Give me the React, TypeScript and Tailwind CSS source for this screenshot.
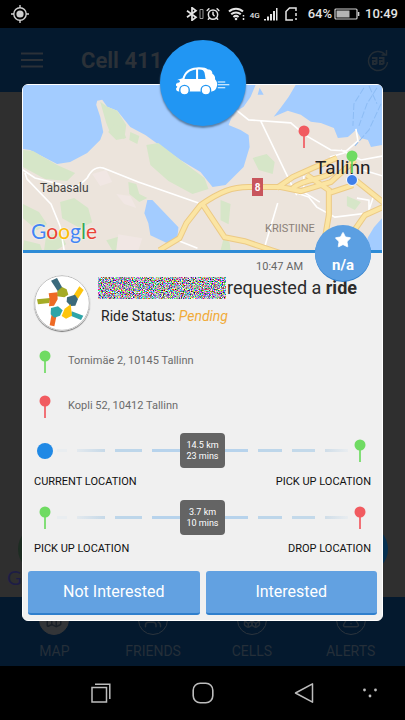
import React from "react";
import { AlarmClock, Star, Map as MapIcon, Users, Boxes, TriangleAlert } from "lucide-react";

const tabs = [
  { label: "MAP", Icon: MapIcon, active: true },
  { label: "FRIENDS", Icon: Users, active: false },
  { label: "CELLS", Icon: Boxes, active: false },
  { label: "ALERTS", Icon: TriangleAlert, active: false }
];

const addresses = [
  { text: "Tornimäe 2, 10145 Tallinn", color: "text-[#6fdb62]" },
  { text: "Kopli 52, 10412 Tallinn", color: "text-[#f15b60]" }
];

function Pin({ color }: { color: string }) {
  return (
    <svg viewBox="0 0 12 24" className={`h-6 w-3 shrink-0 ${color}`} aria-hidden="true">
      <rect x="5" y="8" width="2" height="15" fill="currentColor" opacity="0.85" />
      <circle cx="6" cy="6" r="5.5" fill="currentColor" />
    </svg>
  );
}

function StatusBar() {
  return (
    <div className="flex h-7 items-center bg-black pl-[11px] pr-[7px] text-[13px] font-medium text-[#e4e4e4]">
      <svg viewBox="0 0 18 18" className="h-[18px] w-[18px]" fill="none" stroke="#cfcfcf" strokeWidth="1.4">
        <circle cx="9" cy="9" r="6.2" />
        <path d="M9 0v3M9 15v3M0 9h3M15 9h3" />
        <circle cx="9" cy="9" r="3.6" fill="#cfcfcf" stroke="none" />
      </svg>
      <div className="ml-auto flex items-center">
        <svg viewBox="0 0 12 14" className="h-3.5 w-3" fill="none" stroke="#e4e4e4" strokeWidth="1.7">
          <path d="M1 3.800l9 6.400L6 13.300V.7l4 3.100L1 10.200" />
        </svg>
        <svg viewBox="0 0 5 10" className="ml-px h-2.5 w-[5px]" fill="none" stroke="#9a9a9a">
          <path d="M1 .5h3v9H1z" />
        </svg>
        <AlarmClock className="ml-0.5 h-3.5 w-3.5" strokeWidth={2.6} />
        <svg viewBox="0 0 18 14" className="ml-2 h-3.5 w-[18px]" fill="none" stroke="#e4e4e4" strokeWidth="2">
          <path d="M1 4.500a10 10 0 0 1 14 0M3.200 7.300a7 7 0 0 1 9.600 0M5.400 10a4 4 0 0 1 5.200 0" />
          <circle cx="8" cy="12" r="1.300" fill="#e4e4e4" stroke="none" />
          <path d="M15.500 8v1.500M15.500 11v2" strokeWidth="1.500" />
        </svg>
        <span className="ml-1 mt-1 text-[8px] leading-none">4G</span>
        <svg viewBox="0 0 14 14" className="ml-1 h-3.5 w-3.5" fill="#e4e4e4">
          <path d="M0 12h2v1.500H0zM3 9.500h2v4H3zM6 7h2v6.500H6zM9 4h2v9.500H9zM12 1h1.500v12.500H12z" />
        </svg>
        <svg viewBox="0 0 12 14" className="ml-[7px] h-3.5 w-3" fill="none" stroke="#e4e4e4" strokeWidth="1.500">
          <path d="M8 13H1V4.500L4.500 1H11v3M11 6v3M11 11v2" />
        </svg>
        <span className="ml-[11px]">64%</span>
        <svg viewBox="0 0 26 12" className="ml-0.5 h-3 w-[26px]" fill="none" stroke="#d0d0d0" strokeWidth="1.200">
          <rect x="1" y="1" width="22" height="10" rx="1" />
          <rect x="2.500" y="2.500" width="13" height="7" fill="#b5b5b5" stroke="none" />
          <path d="M24.600 4v4" strokeWidth="1.500" />
        </svg>
        <span className="ml-[5px]">10:49</span>
      </div>
    </div>
  );
}

function AppHeader() {
  return (
    <header className="flex h-16 items-center bg-[#04192e] px-[21px] text-[#2b3138]">
      <button aria-label="Menu">
        <svg viewBox="0 0 22 16" className="h-4 w-[22px]" stroke="currentColor" strokeWidth="2">
          <path d="M0 1.500h22M0 8h22M0 14.500h22" />
        </svg>
      </button>
      <h1 className="ml-[38px] text-[22px] font-bold">Cell 411</h1>
      <button aria-label="Refresh" className="-mr-1.5 ml-auto text-[#222c35]">
        <svg viewBox="0 0 24 24" className="h-6 w-6" fill="none" stroke="currentColor" strokeWidth="1.500">
          <path d="M19 6.500A9.500 9.500 0 1 0 21.500 14M20.500 2v5h-5" />
          <path d="M6 10h4.500v6M10.500 13H7v3h3.500M13 10h4.500v6M17.500 13H14v3h3.500" strokeWidth="2" />
        </svg>
      </button>
    </header>
  );
}

function CarIcon() {
  return (
    <svg viewBox="76 106 162 88" className="h-[30px] w-[55px]" aria-hidden="true">
      <path
        d="M84 146l14-4c5-18 18-31 42-32 18-1 27 1 33 6 9 0 14 6 13 13 6 4 9 9 8 16 6 6 8 14 5 22-2 8-6 13-16 14H88c-6 0-9-3-9-9l4-5-4-3v-6l5-2z"
        fill="#fff"
      />
      <path d="M104 144c3-15 14-25 34-28v28zM144 116c12-1 17 2 19 10l3 18h-22z" fill="#2196f3" />
      <circle cx="86" cy="151" r="4" fill="#2196f3" />
      <circle cx="104" cy="177" r="14" fill="#fff" stroke="#2196f3" strokeWidth="4" />
      <circle cx="167" cy="177" r="14" fill="#fff" stroke="#2196f3" strokeWidth="4" />
      <path d="M202 153h22M202 161h34M202 170h22" stroke="#fff" strokeWidth="3" />
    </svg>
  );
}

function RideMap() {
  return (
    <div className="relative h-[168px] overflow-hidden rounded-t border-b-3 border-[#2d8bd6] bg-[#a3ccff]">
      <svg viewBox="23 85 358 165" preserveAspectRatio="xMidYMid slice" className="h-full w-full" fill="none">
        <path
          d="M22 149l8 1 27 14 13-2 17-9 13-13 3-8-3-15-4-12 1-4 5-1 5 7 10 4 13 16 15 8 18 13 17 12 20 12 12 15 13-2 8-8 10-10 6-20-1-12-8-5-12-5 5-12 10-6 7-10 5-12h40l-7 12-8 11-7 9 14-6 13 4 10 7 10 1 13 5 4 10 10-1 8-7 5 8 7 2 3 7 12-2v72l-9 10-6 10-4 13H22z"
          fill="#ece4dc"
        />
        <g fill="#d6e6c8">
          <path d="M100 102l7 5 10 4 9 14-2 14-14-6-4-10z" />
          <path d="M146 145l12-2 22 17 24 18 4 11-16 5-24-13-18-16z" />
          <path d="M23 150l10 1 24 14 18 8-8 8-22-2-22-12zM60 202l14-4 14 10 4 14-12 6-18-10z" />
          <path d="M23 204l16 8 8 12-10 6-14-12zM46 236l14-4 6 12-10 6H44zM128 182l8 2 3 10 8 4-8 4-10-8zM114 124l8 4 4 10-10 2-8-8zM130 132l9 4-2 8-8-4z" />
          <path d="M252 158l14-4 8 8-2 12-14-4zM220 200l10 4-2 20-8-4zM24 240l16 4 2 6H23zM223 238l6 4 1 8h-10zM346 196l14 6-6 8-8-4zM106 240l14-4 8 8-4 6h-12z" />
        </g>
        <path d="M92 174l14-4 6 12-12 4zM116 194l14 2 6 12-12-4zM118 234l24 4-4 12h-22z" fill="#f1e7e4" />
        <path d="M147 200l5 0 26 27-1 10-10 6-17-8-2-12-4-10zM259 88l4 7h-6z" fill="#a3ccff" />
        <g stroke="#fff" strokeWidth="1.600">
          <path d="M23 170l12 8 24 6c16 6 20 2 28-6 4-8 10-12 16-10l35 14 60 21M25 173l2 6 24 25 9 22 4 24" />
          <path d="M233 108l15 12 42 3 14 12 26 15 16 1M260 121l30 62 6 12M277 203l-14 47M296 193l12 4 8 10 18 10 33-4 6-18M303 176v16l16 10M355 129l2 12-14 12-14 4M340 150l20 10 22-4M177 240l20 8M362 170l20 6M356 198l12 2v10" />
        </g>
        <g stroke="#8dbcf4" strokeWidth="1" strokeDasharray="7 2">
          <path d="M363 88l-10 16-1 22M376 88l-10 16-8 22M380 104l-12 26-14 16M368 86l8 18" />
        </g>
        <g stroke="#ecca85" strokeWidth="6">
          <path d="M159 250l20-12 7-15 14-18c20-14 32-18 48-18h32l20 4 30-9 24-22M202 204l22 33 20 4 36 12M276 188l16-11 20-9 24-10M292 188c12-10 30-8 40-16M306 175l22 15 0 25-6 35M328 193l24-8M352 178l30 24M350 235l14-20 18-8" />
        </g>
        <g stroke="#fbe5a3" strokeWidth="4">
          <path d="M159 250l20-12 7-15 14-18c20-14 32-18 48-18h32l20 4 30-9 24-22M202 204l22 33 20 4 36 12M276 188l16-11 20-9 24-10M292 188c12-10 30-8 40-16M306 175l22 15 0 25-6 35M328 193l24-8M352 178l30 24M350 235l14-20 18-8" />
        </g>
      </svg>
      <span className="absolute left-[17px] top-[95px] text-xs text-[#444]">Tabasalu</span>
      <span className="absolute left-[242px] top-[136px] text-[11px] text-[#8a8078]">KRISTIINE</span>
      <span className="absolute left-[229px] top-[93px] flex h-[18px] w-[11px] items-center justify-center bg-[#c8555c] text-[10px] font-bold text-white">
        8
      </span>
      <span className="absolute left-[292px] top-[69px] text-[19px] text-[#222]">Tallinn</span>
      <span
        className="absolute left-2 top-[130px] font-['Lato'] text-[21px] [text-shadow:0_0_2px_white]"
        aria-label="Google"
      >
        <span className="text-[#4285f4]">G</span>
        <span className="text-[#ea4335]">o</span>
        <span className="text-[#fbbc05]">o</span>
        <span className="text-[#4285f4]">g</span>
        <span className="text-[#34a853]">l</span>
        <span className="text-[#ea4335]">e</span>
      </span>
      <span className="absolute left-[275px] top-10">
        <Pin color="text-[#f15b60]" />
      </span>
      <span className="absolute left-[323px] top-[65px]">
        <Pin color="text-[#6fdb62]" />
      </span>
      <span className="absolute left-[323px] top-[89px] h-3 w-3 rounded-full border border-white bg-[#3f7fea]" />
    </div>
  );
}

function Avatar() {
  return (
    <svg
      viewBox="26 33 168 168"
      className="h-14 w-14 shrink-0 rounded-full bg-white shadow-[0_1px_1px_#777]"
      role="img"
      aria-label="Profile"
    >
      <circle cx="110" cy="117" r="82" stroke="#bbb" strokeWidth="3" fill="none" />
      <path d="M77 50l18-8 18 33-14 9z" fill="#3b6a7c" />
      <path d="M162 67l13 11-17 26-14-9z" fill="#fdc50c" />
      <path d="M139 142l35 13-7 13-31-13z" fill="#2ea5a8" />
      <path d="M79 150l14 8-6 29-14-3z" fill="#ee6a25" />
      <path d="M35 106l40-4-3 15-34 4z" fill="#a4ab26" />
      <path d="M96 82l14-13 14 7 5 16-12 8-22-3z" fill="#a4ab26" />
      <path d="M125 100l24-8 9 13-8 20-14 1-12-13z" fill="#3b6a7c" />
      <path d="M118 134l18-13 4 34-18 9-13-8z" fill="#fdc50c" />
      <path d="M77 132l21-5 14 12-8 16-17 6-11-10z" fill="#2ea5a8" />
      <path d="M70 88l26-3 1 21-11 19-15 2 2-20z" fill="#ee6a25" />
    </svg>
  );
}

// Speckled block that hides the rider's name
function HiddenName() {
  return (
    <svg className="h-[22px] w-32 shrink-0" role="img" aria-label="Hidden name">
      <filter id="speckle" x="0" y="0" width="100%" height="100%" colorInterpolationFilters="sRGB">
        <feTurbulence type="fractalNoise" baseFrequency="0.9" numOctaves="3" seed="4" />
        <feColorMatrix values="3 0 0 0 -0.850  0 3 0 0 -0.850  0 0 3 0 -0.800  0 0 0 0 1" />
      </filter>
      <rect width="100%" height="100%" filter="url(#speckle)" />
    </svg>
  );
}

interface RouteRowProps {
  start: React.ReactNode;
  end: React.ReactNode;
  from: string;
  to: string;
  distance: string;
  duration: string;
}

function RouteRow({ start, end, from, to, distance, duration }: RouteRowProps) {
  return (
    <div>
      <div className="flex h-[35px] items-center px-[3px]">
        <span className="flex w-4 justify-center">{start}</span>
        <span className="ml-1 flex flex-1 gap-2.5">
          <span className="h-[3px] w-2.5 bg-[#e9edf0]" />
          <span className="h-[3px] flex-1 bg-linear-to-r from-[#e3e9ee] to-[#c6d9e8]" />
          <span className="h-[3px] flex-1 bg-[#bdd6ea]" />
          <span className="h-[3px] flex-1 bg-[#b7d3ec]" />
        </span>
        <span className="flex h-[35px] w-[45px] flex-col justify-center rounded bg-[#646464] text-center text-[9px] leading-[11px] text-white">
          <span>{distance}</span>
          <span>{duration}</span>
        </span>
        <span className="mr-1 flex flex-1 gap-2.5">
          <span className="h-[3px] flex-1 bg-[#b7d3ec]" />
          <span className="h-[3px] flex-1 bg-[#bdd6ea]" />
          <span className="h-[3px] flex-1 bg-[#c3d9ea]" />
          <span className="h-[3px] flex-1 bg-linear-to-r from-[#cfdde8] to-[#e9edf0]" />
        </span>
        <span className="flex w-4 justify-center">{end}</span>
      </div>
      <div className="mt-1 flex justify-between text-[11px] leading-5 text-[#111]">
        <span>{from}</span>
        <span>{to}</span>
      </div>
    </div>
  );
}

function RideRequestCard() {
  return (
    <section
      role="dialog"
      aria-label="Ride request"
      className="absolute inset-x-[22px] top-[84px] rounded-md border border-white bg-[#f0f0f0]"
    >
      <div className="absolute -top-[45px] left-1/2 z-10 flex h-[86px] w-[86px] -translate-x-1/2 items-center justify-center rounded-full bg-[#2196f3] pb-1 shadow-[0_2px_2px_#5b7fa5]">
        <CarIcon />
      </div>
      <RideMap />
      <div className="absolute right-[11px] top-[140px] flex h-14 w-14 flex-col items-center justify-center rounded-full bg-[#5b9fe2] text-white shadow-[0_1px_0_#2f7fcd]">
        <Star className="h-[18px] w-[18px] fill-white" strokeWidth={1} />
        <span className="mt-1.5 text-[15px] font-bold leading-5">n/a</span>
      </div>

      <div className="px-[11px] pt-1.5">
        <p className="mr-[68px] text-right text-[11px] leading-4 text-[#666]">10:47 AM</p>
        <div className="flex gap-2">
          <Avatar />
          <div>
            <div className="flex items-center pt-px text-[18px] leading-6 text-[#2c2c2c]">
              <HiddenName />
              <h2 className="ml-px whitespace-nowrap">
                requested a <b>ride</b>
              </h2>
            </div>
            <p className="ml-[3px] mt-1 text-sm leading-6 text-[#222]">
              Ride Status: <em className="text-[#f0ab3a]">Pending</em>
            </p>
          </div>
        </div>

        <ul className="mt-2">
          {addresses.map((address) => (
            <li key={address.text} className="flex h-[45px] items-center gap-[17px] pl-[5px] text-[11px] text-[#6b6b6b]">
              <Pin color={address.color} />
              {address.text}
            </li>
          ))}
        </ul>

        <div className="mt-1 space-y-2">
          <RouteRow
            start={<span className="h-4 w-4 rounded-full bg-[#2089e5]" />}
            end={<Pin color="text-[#6fdb62]" />}
            from="CURRENT LOCATION"
            to="PICK UP LOCATION"
            distance="14.5 km"
            duration="23 mins"
          />
          <RouteRow
            start={<Pin color="text-[#6fdb62]" />}
            end={<Pin color="text-[#f15b60]" />}
            from="PICK UP LOCATION"
            to="DROP LOCATION"
            distance="3.7 km"
            duration="10 mins"
          />
        </div>
      </div>

      <div className="grid grid-cols-2 gap-1.5 px-[5px] pb-[5px] pt-3">
        <button className="h-11 rounded-[3px] border-b-2 border-[#2f7fcd] bg-[#62a1e1] text-base text-white">
          Not Interested
        </button>
        <button className="h-11 rounded-[3px] border-b-2 border-[#2f7fcd] bg-[#62a1e1] text-base text-white">
          Interested
        </button>
      </div>
    </section>
  );
}

function TabBar() {
  return (
    <nav className="grid h-[69px] grid-cols-4 bg-[#04192e] px-[5px] text-[#252f39]">
      {tabs.map(({ label, Icon, active }) => (
        <button key={label} className="flex flex-col items-center pt-2 text-sm leading-5">
          <span
            className={`flex h-[30px] w-[30px] items-center justify-center rounded-full border ${
              active ? "border-[#333538] bg-[#333538] text-[#1a2028]" : "border-[#2b343d]"
            }`}
          >
            <Icon className="h-[18px] w-[18px]" />
          </span>
          <span className="mt-1.5">{label}</span>
        </button>
      ))}
    </nav>
  );
}

function SystemNav() {
  return (
    <div className="grid h-[54px] grid-cols-8 items-center bg-black text-[#bdbdbd]">
      <button aria-label="Recent apps" className="col-span-2 col-start-2 flex justify-center">
        <svg viewBox="0 0 20 20" className="h-5 w-5" fill="none" stroke="currentColor" strokeWidth="1.500">
          <path d="M1 4.500h14.500V19H1zM4 1.300h14.800V16" />
        </svg>
      </button>
      <button aria-label="Home" className="col-span-2 flex justify-center">
        <svg viewBox="0 0 22 22" className="h-[22px] w-[22px]" fill="none" stroke="currentColor" strokeWidth="1.600">
          <rect x="1.200" y="1.200" width="19.600" height="19.600" rx="7" />
        </svg>
      </button>
      <button aria-label="Back" className="col-span-2 flex justify-center">
        <svg viewBox="0 0 20 22" className="h-[22px] w-5" fill="none" stroke="currentColor" strokeWidth="1.500" strokeLinejoin="round">
          <path d="M18.500 1.800v18.400L1.500 11z" />
        </svg>
      </button>
      <button aria-label="More" className="pl-2">
        <svg viewBox="0 0 16 10" className="h-2.5 w-4" fill="currentColor">
          <circle cx="2.500" cy="2" r="1.400" />
          <circle cx="13.500" cy="2" r="1.400" />
          <circle cx="8" cy="8" r="1.400" />
        </svg>
      </button>
    </div>
  );
}

export default function App() {
  return (
    <div className="relative flex min-h-screen flex-col bg-black font-['Roboto',sans-serif]">
      <StatusBar />
      <AppHeader />
      <main className="relative flex-1 overflow-hidden bg-[#2f2f2f]">
        <span className="absolute bottom-2 left-[7px] font-['Lato'] text-xl leading-6 text-[#1d1d45]">G</span>
        <span className="absolute bottom-6 right-[17px] h-12 w-12 rounded-full bg-[#063050]" />
        <span className="absolute bottom-6 left-[18px] h-12 w-12 rounded-full bg-[#1d2c22]" />
      </main>
      <TabBar />
      <SystemNav />
      <RideRequestCard />
    </div>
  );
}
